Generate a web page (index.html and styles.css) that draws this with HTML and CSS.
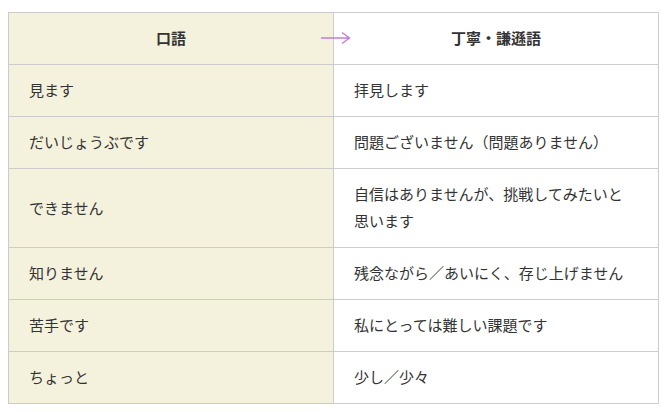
FILE: index.html
```html
<!DOCTYPE html>
<html lang="ja">
<head>
<meta charset="utf-8">
<link rel="stylesheet" href="styles.css">
</head>
<body>
<div class="wrap">
<table class="tbl">
<colgroup><col class="c-half"><col class="c-half"></colgroup>
<thead>
<tr>
<th class="col-a">口語</th>
<th class="col-b">
<svg class="arrow" width="30" height="14" viewBox="0 0 30 14"><path d="M0 7 H28 M21 1.5 L28.5 7 L21 12.5" fill="none" stroke="#c77bd6" stroke-width="1.4"/></svg>
丁寧・謙遜語</th>
</tr>
</thead>
<tbody>
<tr><td class="col-a">見ます</td><td class="col-b">拝見します</td></tr>
<tr><td class="col-a">だいじょうぶです</td><td class="col-b">問題ございません（問題ありません）</td></tr>
<tr><td class="col-a">できません</td><td class="col-b">自信はありませんが、挑戦してみたいと思います</td></tr>
<tr><td class="col-a">知りません</td><td class="col-b">残念ながら／あいにく、存じ上げません</td></tr>
<tr><td class="col-a">苦手です</td><td class="col-b">私にとっては難しい課題です</td></tr>
<tr><td class="col-a">ちょっと</td><td class="col-b">少し／少々</td></tr>
</tbody>
</table>
</div>
</body>
</html>
```

FILE: styles.css
```css
html, body {
  margin: 0;
  padding: 0;
  background: #ffffff;
}
.wrap {
  padding: 12px 10px 0 8px;
}
.tbl {
  width: 650px;
  border-collapse: collapse;
  table-layout: fixed;
  font-family: "Noto Sans CJK JP", "Noto Sans", sans-serif;
  font-size: 15px;
  line-height: 27px;
  color: #333333;
}
.c-half {
  width: 325px;
}
.tbl th, .tbl td {
  border: 1px solid #cccccc;
  padding: 11px 24px 13px 20px;
  vertical-align: middle;
  text-align: left;
  font-weight: normal;
}
.tbl th {
  text-align: center;
  font-weight: bold;
  padding-right: 20px;
}
.col-a {
  background: #f4f2dc;
}
.col-b {
  background: #ffffff;
  position: relative;
}
.arrow {
  position: absolute;
  left: -13px;
  top: 18px;
}
```
